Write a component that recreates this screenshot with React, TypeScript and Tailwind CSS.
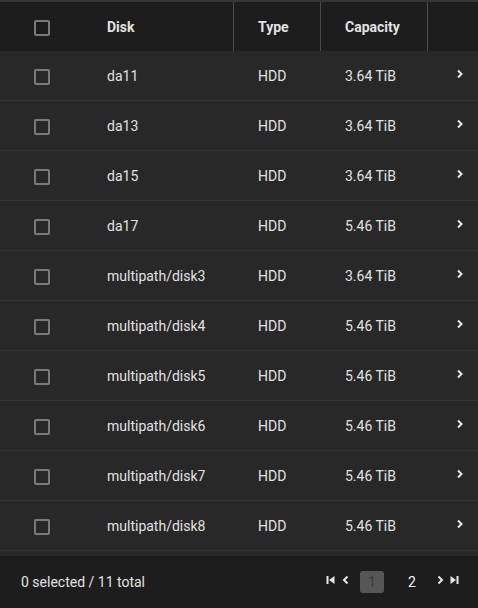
import React from "react";

const rows = [
  ["da11", "HDD", "3.64 TiB"],
  ["da13", "HDD", "3.64 TiB"],
  ["da15", "HDD", "3.64 TiB"],
  ["da17", "HDD", "5.46 TiB"],
  ["multipath/disk3", "HDD", "3.64 TiB"],
  ["multipath/disk4", "HDD", "5.46 TiB"],
  ["multipath/disk5", "HDD", "5.46 TiB"],
  ["multipath/disk6", "HDD", "5.46 TiB"],
  ["multipath/disk7", "HDD", "5.46 TiB"],
  ["multipath/disk8", "HDD", "5.46 TiB"],
];

function Box() {
  return <div className="w-4 h-4 border-2 border-[#7a7a7a] rounded-[2px]" />;
}

function Chevron() {
  return (
    <svg width="8" height="10" viewBox="0 0 8 10" className="block">
      <path d="M2 1.5 L5.5 5 L2 8.5" fill="none" stroke="#e6e6e6" strokeWidth="2" />
    </svg>
  );
}

export default function App() {
  return (
    <div
      className="w-[478px] h-[608px] bg-[#282828] text-[#e2e2e2] flex flex-col overflow-hidden"
      style={{ fontFamily: "Roboto, 'Liberation Sans', sans-serif" }}
    >
      {/* header */}
      <div className="flex h-[51px] shrink-0 border-t-2 border-[#363636] bg-[#1d1d1d] text-[14px] font-bold">
        <div className="w-[83px] flex items-center pl-[34px] pt-[2px]">
          <Box />
        </div>
        <div className="w-[151px] flex items-center pl-6 pt-[2px] border-r border-[#4a4a4a]">Disk</div>
        <div className="w-[87px] flex items-center pl-6 pt-[2px] border-r border-[#4a4a4a]">Type</div>
        <div className="w-[107px] flex items-center pl-6 pt-[2px] border-r border-[#4a4a4a]">Capacity</div>
        <div className="flex-1" />
      </div>
      {/* rows */}
      {rows.map(([d, t, c]) => (
        <div key={d} className="flex h-[50px] shrink-0 pt-[2px] border-b border-[#333333] text-[14px]">
          <div className="w-[83px] flex items-center pl-[34px]">
            <Box />
          </div>
          <div className="w-[151px] flex items-center pl-6">{d}</div>
          <div className="w-[87px] flex items-center pl-6">{t}</div>
          <div className="w-[107px] flex items-center pl-6">{c}</div>
          <div className="flex-1 flex items-center justify-end pr-[14px] pb-[6px]">
            <Chevron />
          </div>
        </div>
      ))}
      <div className="h-[5px] shrink-0" />
      {/* footer */}
      <div className="flex-1 bg-[#1d1d1d] flex items-center justify-between pl-[21px] pr-[19px] text-[14px]">
        <span>0 selected / 11 total</span>
        <div className="flex items-center">
          <svg width="10" height="10" viewBox="0 0 10 10" className="mb-[5px]">
            <rect x="0.5" y="1" width="2" height="8" fill="#e6e6e6" />
            <path d="M8.5 1 L3 5 L8.5 9 Z" fill="#e6e6e6" />
          </svg>
          <svg width="8" height="10" viewBox="0 0 8 10" className="ml-[6px] mb-[5px]">
            <path d="M5.5 1.5 L2 5 L5.5 8.5" fill="none" stroke="#e6e6e6" strokeWidth="2" />
          </svg>
          <div className="ml-[10px] w-[24px] h-[22px] rounded-[3px] bg-[#565656] text-[#3a3a3a] flex items-center justify-center">
            1
          </div>
          <div className="ml-[24px] w-[8px] text-center text-[#f0f0f0]">2</div>
          <svg width="8" height="10" viewBox="0 0 8 10" className="ml-[20px] mb-[5px]">
            <path d="M2.5 1.5 L6 5 L2.5 8.5" fill="none" stroke="#e6e6e6" strokeWidth="2" />
          </svg>
          <svg width="10" height="10" viewBox="0 0 10 10" className="ml-[5px] mb-[5px]">
            <path d="M1.5 1 L7 5 L1.5 9 Z" fill="#e6e6e6" />
            <rect x="7.5" y="1" width="2" height="8" fill="#e6e6e6" />
          </svg>
        </div>
      </div>
    </div>
  );
}
